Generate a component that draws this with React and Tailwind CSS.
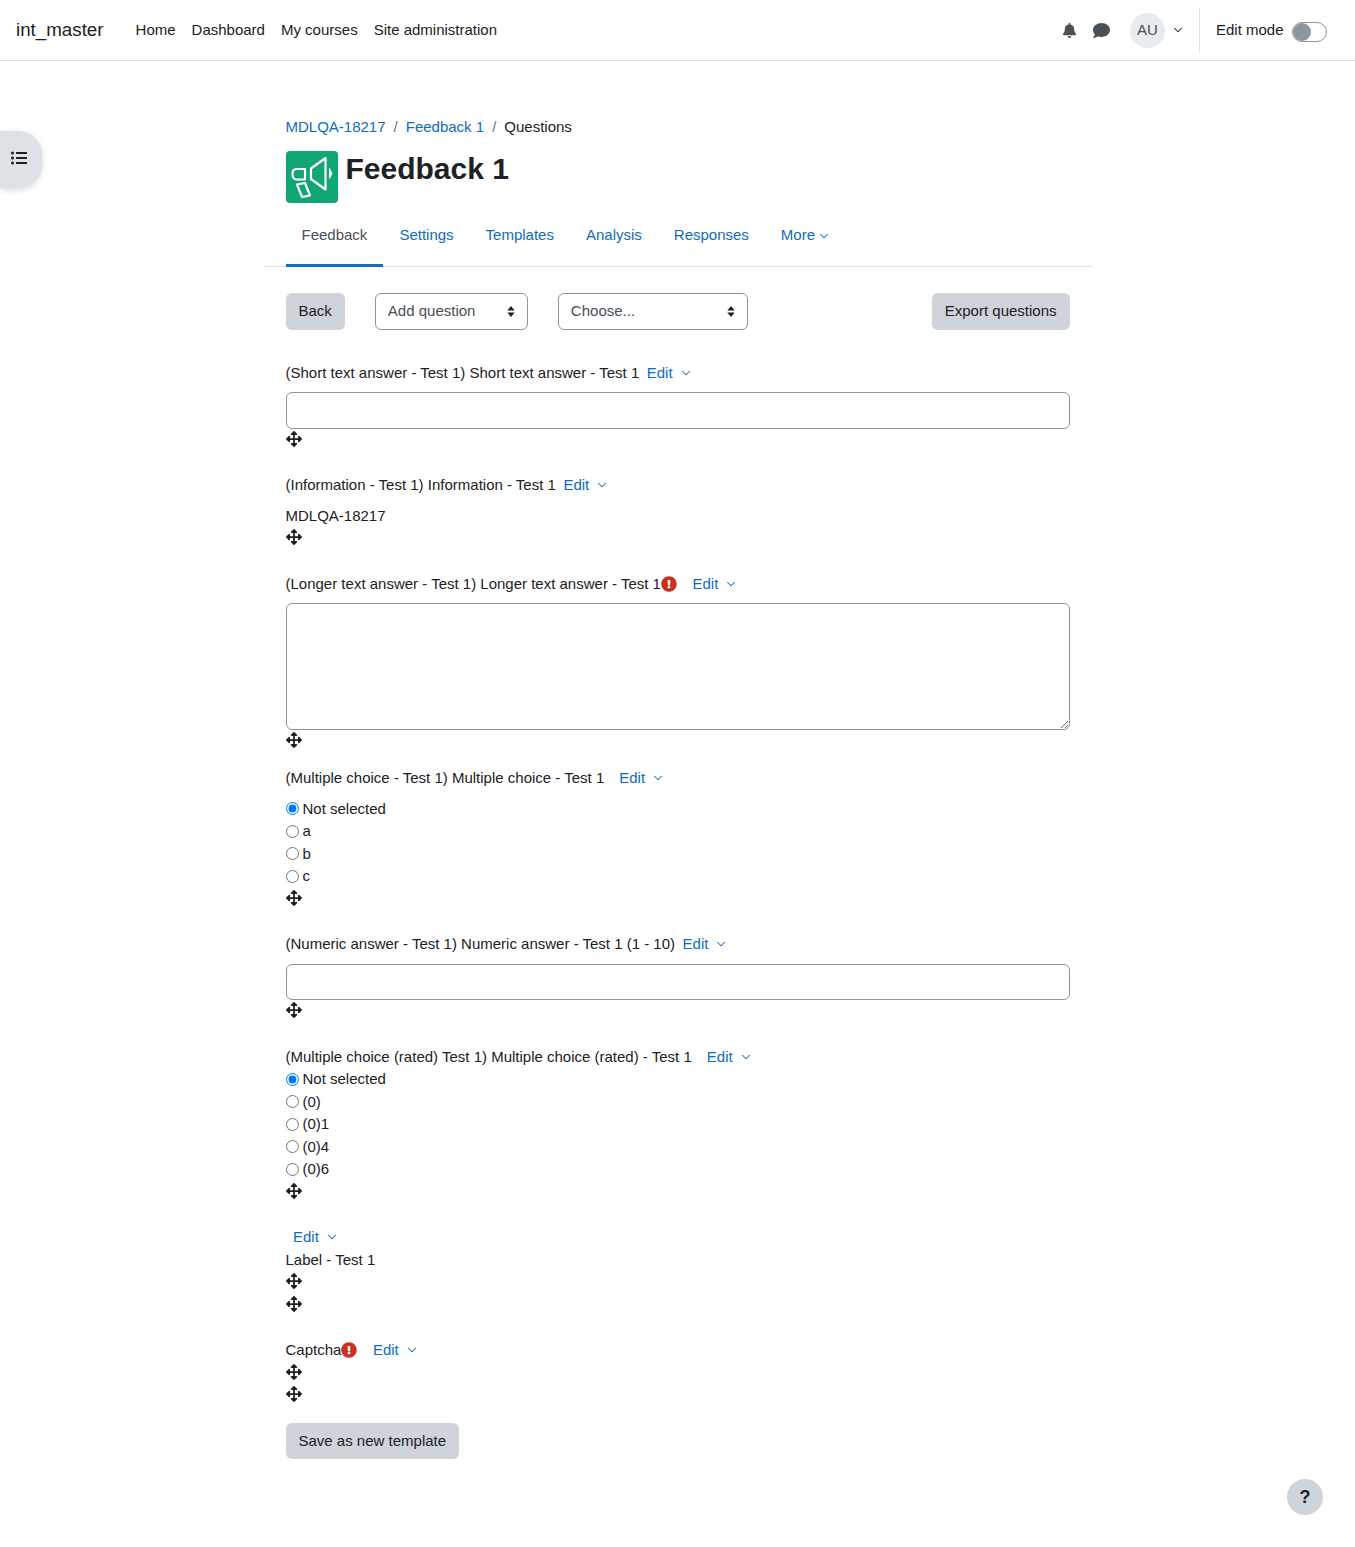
import { ChevronDown } from "lucide-react";
import { FaArrowsAlt, FaBell, FaComment, FaExclamationCircle, FaListUl } from "react-icons/fa";

const tabs = ["Settings", "Templates", "Analysis", "Responses"];

function MoveIcon() {
  return (
    <div className="flex h-[22.5px] items-center pb-[2px] text-[#1d2125]">
      <FaArrowsAlt size={16} />
    </div>
  );
}

function EditMenu({ className }) {
  return (
    <a href="#" className={`flex items-center text-[#0f6cbf] ${className}`}>
      Edit
      <ChevronDown size={14} strokeWidth={1.75} className="ml-[6px]" />
    </a>
  );
}

function ErrorIcon() {
  return <FaExclamationCircle size={16} className="text-[#ca3120]" />;
}

function QuestionLabel({ text, required, editClass = "ml-[7.5px]", className = "" }) {
  return (
    <div className={`flex h-[22.5px] items-center ${className}`}>
      <span className="whitespace-pre">{text}</span>
      {required && <ErrorIcon />}
      <EditMenu className={editClass} />
    </div>
  );
}

function RadioList({ name, options }) {
  return (
    <div>
      {options.map((option, index) => (
        <label key={option} className="flex h-[22.5px] items-center gap-[4px]">
          <input type="radio" name={name} defaultChecked={index === 0} />
          <span>{option}</span>
        </label>
      ))}
    </div>
  );
}

function TextInput({ className = "" }) {
  return <input type="text" className={`block h-[36.5px] w-full rounded-md border border-[#8f959e] bg-white ${className}`} />;
}

function SelectBox({ label, className }) {
  return (
    <div className={`relative h-[36.5px] ${className}`}>
      <select className="h-full w-full appearance-none rounded-md border border-[#8f959e] bg-white px-3 text-[#495057]">
        <option>{label}</option>
      </select>
      <svg viewBox="0 0 8 12" className="pointer-events-none absolute right-[13px] top-[13px] h-[11px] w-[8px] fill-[#1d2125]">
        <path d="M4 0 8 5H0zM4 12 0 7h8z" />
      </svg>
    </div>
  );
}

function GreyButton({ children }) {
  return (
    <button type="button" className="h-[36.5px] rounded-md bg-[#ced4da] px-[13px] text-[#1d2125]">
      {children}
    </button>
  );
}

function FeedbackIcon() {
  return (
    <div className="flex h-[52px] w-[52px] shrink-0 items-center justify-center rounded bg-[#11a676]">
      <svg viewBox="0 0 52 52" className="h-[52px] w-[52px]" fill="none" stroke="#fff" strokeWidth="2.200" strokeLinejoin="round">
        <path d="M25 17.500 39.500 7v31.500L25 28z" />
        <path d="M19 18h-9a4 4 0 0 0-3.400 5 5 5 0 0 0 3.400 5.500h9z" />
        <path d="M11 33.500 19 32 24 44.500 16 46z" />
        <path d="M43.500 17.500 46 22.500 43.500 27.500z" fill="#fff" strokeWidth="1" />
      </svg>
    </div>
  );
}

function Header() {
  return (
    <header className="flex h-[61px] items-center border-b border-[#dee2e6] pl-4 pr-[28px]">
      <a href="#" className="text-[18.75px] text-[#1d2125]">int_master</a>
      <nav className="ml-[32px] flex gap-4 text-[#1d2125]">
        <a href="#">Home</a>
        <a href="#">Dashboard</a>
        <a href="#">My courses</a>
        <a href="#">Site administration</a>
      </nav>
      <div className="ml-auto flex items-center">
        <FaBell size={15} className="text-[#495057]" />
        <FaComment size={17} className="ml-[16px] text-[#495057]" />
        <div className="ml-[20px] flex h-[35px] w-[35px] items-center justify-center rounded-full bg-[#e9ecef] text-[#495057]">AU</div>
        <ChevronDown size={14} strokeWidth={1.75} className="ml-[6px] text-[#1d2125]" />
        <div className="ml-[14px] h-[45px] w-px bg-[#dee2e6]" />
        <span className="ml-4 text-[#1d2125]">Edit mode</span>
        <div className="ml-[8.5px] mt-[3px] flex h-5 w-[35px] items-center rounded-full border border-[#8f959e] bg-white">
          <div className="h-[18px] w-[18px] rounded-full bg-[#8f959e]" />
        </div>
      </div>
    </header>
  );
}

function App() {
  return (
    <div className="relative min-h-[1547px] bg-white text-[15px] leading-[22.5px] text-[#1d2125] [font-family:'Liberation_Sans',Arial,sans-serif]">
      <Header />

      <button type="button" className="absolute left-0 top-[131px] flex h-[57px] w-[42px] items-center rounded-r-[24px] bg-[#dee2e6] pb-[4px] pl-[11px] shadow-[0_2px_6px_rgba(0,0,0,0.15)]">
        <FaListUl size={16} className="text-[#1d2125]" />
      </button>

      <main className="mx-auto w-[830px]">
        <div className="px-[23px] pt-[55px]">
          <div className="flex h-[22.5px] items-center">
            <a href="#" className="text-[#0f6cbf]">MDLQA-18217</a>
            <span className="px-2 text-[#6a737b]">/</span>
            <a href="#" className="text-[#0f6cbf]">Feedback 1</a>
            <span className="px-2 text-[#6a737b]">/</span>
            <span>Questions</span>
          </div>
          <div className="mt-[12.500px] flex gap-2">
            <FeedbackIcon />
            <h1 className="text-[30px] font-bold leading-[36px]">Feedback 1</h1>
          </div>
        </div>

        <div className="flex h-[64px] border-b border-[#dee2e6] px-[23px]">
          <a href="#" className="flex h-[64px] items-center border-b-[3px] border-[#0f6cbf] px-4 pt-[3px] text-[#495057]">Feedback</a>
          {tabs.map((tab) => (
            <a key={tab} href="#" className="flex items-center px-4 pt-[2px] text-[#0f6cbf]">{tab}</a>
          ))}
          <a href="#" className="flex items-center px-4 pt-[2px] text-[#0f6cbf]">
            More
            <ChevronDown size={14} strokeWidth={1.75} className="ml-[2px]" />
          </a>
        </div>

        <div className="px-[23px] pt-[26px]">
          <div className="flex items-center">
            <GreyButton>Back</GreyButton>
            <SelectBox label="Add question" className="ml-[30px] w-[153px]" />
            <SelectBox label="Choose..." className="ml-[30px] w-[190px]" />
            <div className="ml-auto">
              <GreyButton>Export questions</GreyButton>
            </div>
          </div>

          <QuestionLabel className="mt-[32px]" text="(Short text answer - Test 1) Short text answer - Test 1" />
          <TextInput className="mt-2" />
          <MoveIcon />

          <QuestionLabel className="mt-[23px]" text="(Information - Test 1) Information - Test 1" />
          <div className="mt-2">MDLQA-18217</div>
          <MoveIcon />

          <QuestionLabel className="mt-[23px]" text="(Longer text answer - Test 1) Longer text answer - Test 1" required editClass="ml-[15.5px]" />
          <textarea className="mt-2 block h-[127px] w-full rounded-md border border-[#8f959e] bg-white" />
          <MoveIcon />

          <QuestionLabel className="mt-[14.5px]" text="(Multiple choice - Test 1) Multiple choice - Test 1" editClass="ml-[15px]" />
          <div className="mt-2">
            <RadioList name="multi" options={["Not selected", "a", "b", "c"]} />
          </div>
          <MoveIcon />

          <QuestionLabel className="mt-[23px]" text="(Numeric answer - Test 1) Numeric answer - Test 1 (1 - 10)" />
          <TextInput className="mt-2" />
          <MoveIcon />

          <QuestionLabel className="mt-[23px]" text="(Multiple choice (rated) Test 1) Multiple choice (rated) - Test 1" editClass="ml-[15px]" />
          <RadioList name="rated" options={["Not selected", "(0)", "(0)1", "(0)4", "(0)6"]} />
          <MoveIcon />

          <QuestionLabel className="mt-[23px]" text="" />
          <div>Label - Test 1</div>
          <MoveIcon />
          <MoveIcon />

          <QuestionLabel className="mt-[23px]" text="Captcha" required editClass="ml-[15.5px]" />
          <MoveIcon />
          <MoveIcon />

          <div className="mt-[16.4px]">
            <GreyButton>Save as new template</GreyButton>
          </div>
        </div>
      </main>

      <button type="button" className="absolute bottom-[32px] right-[32px] flex h-9 w-9 items-center justify-center rounded-full bg-[#ced4da] text-[18px] font-bold text-[#1d2125]">
        ?
      </button>
    </div>
  );
}

export default App;
